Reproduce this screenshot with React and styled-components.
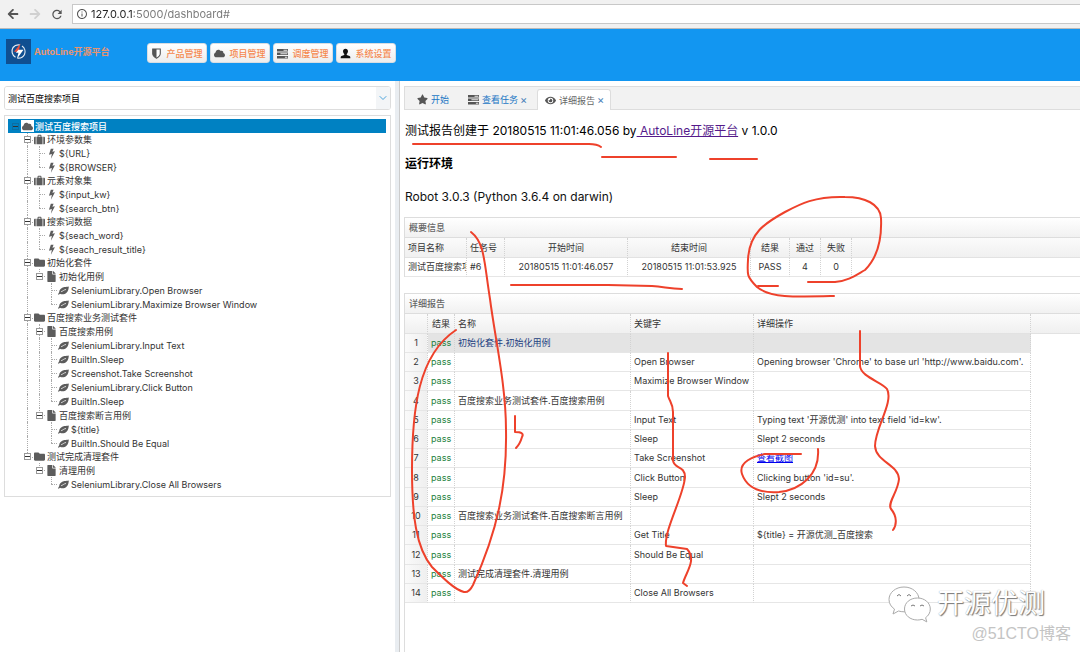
import React from 'react'
import styled, { createGlobalStyle, css } from 'styled-components'

//REACT ICONS
import {
  FaArrowLeft, FaArrowRight, FaCloud, FaEye, FaFile, FaFolder, FaStar,
} from 'react-icons/fa'
import { MdInfoOutline, MdRefresh } from 'react-icons/md'
import { FiChevronDown } from 'react-icons/fi'

const GlobalStyle = createGlobalStyle`
  * { box-sizing: border-box; }
  body {
    margin: 0;
    background: #fff;
    color: #333;
    font-family: Inter, "Noto Sans CJK SC", sans-serif;
    font-size: 9px;
  }
  button, input, select { font: inherit; margin: 0; }
  a { text-decoration: none; }
`

const Page = styled.div`
  position: relative;
  min-height: 100vh;
  display: flex;
  flex-direction: column;
  overflow: hidden;
`

// browser chrome
const BrowserBar = styled.div`
  height: 29px;
  display: flex;
  align-items: center;
  background: #f1f1f1;
  border-bottom: 1px solid #b9b9b9;
  padding-left: 6px;
`
const NavButton = styled.button`
  width: 14px;
  height: 20px;
  padding: 0;
  margin-right: 8px;
  border: none;
  background: none;
  display: flex;
  align-items: center;
  justify-content: center;
  color: ${props => (props.disabled ? '#d0d0d0' : '#555')};
  font-size: ${props => (props.$big ? 15 : 12)}px;
`
const AddressBox = styled.label`
  flex: 1;
  height: 20px;
  display: flex;
  align-items: center;
  gap: 3px;
  padding-left: 3px;
  background: #fff;
  border: 1px solid #c8c8c8;
  border-right: none;
  font-size: 12px;
  color: #555;
`
const Address = styled.input`
  flex: 1;
  height: 18px;
  border: none;
  outline: none;
  padding: 0;
  font-size: 11px;
  color: transparent;
  background: linear-gradient(90deg, #222 43px, #777 43px);
  background-clip: text;
`

// top banner
const Banner = styled.header`
  height: 52px;
  display: flex;
  align-items: flex-start;
  padding: 10px 6px 0;
  background: #1296f1;
`
const Brand = styled.div`
  width: 141px;
  height: 25px;
  display: flex;
  align-items: center;
  gap: 3px;
  font-weight: 700;
  color: #e8946f;
`
const Menu = styled.nav`
  display: flex;
  gap: 3px;
  padding-top: 4px;
`
const MenuButton = styled.button`
  width: 60px;
  height: 20px;
  display: flex;
  align-items: center;
  justify-content: center;
  gap: 4px;
  padding: 0;
  white-space: nowrap;
  border: 1px solid #d8dde2;
  border-radius: 3px;
  background: linear-gradient(#fff, #ededed);
  color: #f5884e;
  font-weight: 500;
  svg { font-size: 11px; color: #555; flex: none; }
`

// split layout
const Body = styled.div`
  flex: 1;
  display: flex;
`
const Side = styled.aside`
  width: 395px;
  flex: none;
  padding: 5px 4px;
`
const Splitter = styled.div`
  width: 5px;
  flex: none;
  background: #e9edf1;
  border-right: 1px solid #ccc;
`
const Main = styled.main`
  flex: 1;
  min-width: 0;
  display: flex;
  flex-direction: column;
  padding: 5px 0 0 4px;
`
const Combo = styled.label`
  height: 24px;
  display: flex;
  align-items: center;
  position: relative;
  border: 1px solid #ddd;
  border-radius: 3px;
  overflow: hidden;
`
const Select = styled.select`
  flex: 1;
  height: 22px;
  border: none;
  outline: none;
  appearance: none;
  padding: 0 0 0 3px;
  background: #fff;
  color: #000;
`
const ComboArrow = styled.span`
  position: absolute;
  right: 0;
  top: 0;
  bottom: 0;
  width: 14px;
  display: flex;
  align-items: center;
  justify-content: center;
  background: #f3f5f7;
  color: #4aa3dc;
  font-size: 12px;
  pointer-events: none;
`

const SideInner = styled.div`
  width: 387px;
`
const Tree = styled.ul`
  list-style: none;
  margin: 5px 0 0;
  padding: 3px 4px 5px 3px;
  border: 1px solid #ddd;
`
const SubTree = styled.ul`
  list-style: none;
  margin: 0;
  padding: 0;
`
const TreeRow = styled.div`
  height: ${props => (props.$depth === 1 ? 13 : 14)}px;
  display: flex;
  align-items: center;
  padding-left: 1px;
  white-space: nowrap;
  color: #333;
  ${props => props.$selected && css`
    background: #0081c2;
    color: #fff;
    font-weight: 500;
  `}
`
const Guide = styled.span`
  width: 12px;
  align-self: stretch;
  flex: none;
  display: flex;
  align-items: center;
  justify-content: center;
  position: relative;
  &::before {
    content: '';
    display: ${props => (props.$line ? 'block' : 'none')};
    position: absolute;
    left: 6px;
    top: 0;
    bottom: ${props => (props.$last ? '50%' : 0)};
    border-left: 1px dotted #aaa;
  }
  &::after {
    content: '';
    display: ${props => (props.$arm ? 'block' : 'none')};
    position: absolute;
    left: 6px;
    right: 0;
    top: 50%;
    border-top: 1px dotted #aaa;
  }
`
const Toggle = styled.button`
  position: relative;
  z-index: 1;
  width: 7px;
  height: 7px;
  padding: 0;
  border: 1px solid ${props => (props.$root ? '#0a6ea5' : '#999')};
  background: ${props => (props.$root ? '#0081c2' : '#fff')};
  display: flex;
  align-items: center;
  &::before {
    content: '';
    width: 5px;
    height: 1px;
    background: #333;
  }
`
const NodeIcon = styled.span`
  width: 13px;
  height: 12px;
  flex: none;
  display: flex;
  align-items: center;
  justify-content: center;
  font-size: 11px;
  color: #5c5c5c;
  background: ${props => (props.$boxed ? '#fff' : 'none')};
`
const NodeText = styled.span`
  padding-left: 1px;
`

// tabs
const Tabs = styled.div`
  height: 24px;
  display: flex;
  align-items: flex-end;
  flex: none;
  padding-left: 1px;
  background: #f2f2f2;
  border: 1px solid #ddd;
  border-right: none;
`
const Tab = styled.div`
  height: ${props => (props.$active ? 21 : 20)}px;
  margin-bottom: ${props => (props.$active ? -1 : 0)}px;
  display: flex;
  align-items: center;
  padding: ${props => (props.$active ? '0 4px 0 7px' : '0 7px 0 10px')};
  border: 1px solid ${props => (props.$active ? '#ddd' : 'transparent')};
  border-bottom: none;
  border-radius: 3px 3px 0 0;
  background: ${props => (props.$active ? '#fff' : 'none')};
  svg { font-size: 11px; color: #555; margin-right: 3px; }
`
const TabLabel = styled.button`
  display: flex;
  align-items: center;
  padding: 0;
  border: none;
  background: none;
  white-space: nowrap;
  color: ${props => (props.$active ? '#666' : '#1a76c4')};
`
const TabClose = styled.button`
  width: 11px;
  padding: 0;
  border: none;
  background: none;
  font-size: 11px;
  line-height: 12px;
  color: #4a7fb8;
`

// report
const Report = styled.div`
  flex: 1;
  display: flex;
  flex-direction: column;
  padding-left: 1px;
`
const Intro = styled.p`
  margin: 0;
  padding-top: 12px;
  font-size: 12px;
  line-height: 18px;
  color: #000;
`
const IntroLink = styled.a`
  color: #551a8b;
  text-decoration: underline;
`
const EnvTitle = styled.h3`
  margin: 15px 0 0;
  font-size: 12px;
  line-height: 18px;
  font-weight: 600;
  color: #000;
`
const EnvText = styled.p`
  margin: 15px 0 11px;
  font-size: 12px;
  line-height: 18px;
  color: #111;
`
const Panel = styled.section`
  flex: ${props => (props.$fill ? '1' : 'none')};
  border: 1px solid #ddd;
  border-right: none;
  border-bottom: none;
  margin-left: -1px;
  margin-bottom: ${props => (props.$fill ? 0 : 16)}px;
`
const PanelTitle = styled.h4`
  height: 20px;
  margin: 0;
  padding-left: 4px;
  line-height: 20px;
  font-size: 9px;
  font-weight: 500;
  color: #666;
  background: linear-gradient(#fff, #f1f1f1);
  border-bottom: 1px solid #ddd;
`
const Grid = styled.table`
  width: 100%;
  table-layout: fixed;
  border-collapse: separate;
  border-spacing: 0;
`
const HeadCell = styled.th`
  height: 20px;
  padding: 0 3px;
  font-weight: 400;
  text-align: ${props => props.$align || 'left'};
  white-space: nowrap;
  color: #333;
  background: linear-gradient(#fbfbfb, #f0f0f0);
  border-right: 1px dotted #d2d2d2;
  border-bottom: 1px solid #e2e2e2;
  &:last-child { border-right: none; }
`
const Cell = styled.td`
  height: 19px;
  padding: 0 3px;
  line-height: 12px;
  text-align: ${props => props.$align || 'left'};
  white-space: nowrap;
  overflow: hidden;
  color: ${props => props.$color || '#333'};
  border-right: 1px dotted #d2d2d2;
  border-bottom: 1px solid #e6e6e6;
`
const RowNumber = styled(Cell)`
  text-align: center;
  background: linear-gradient(90deg, #fafafa, #efefef);
`
const Filler = styled.td`
  background: #fff;
  border-bottom: ${props => (props.$line ? '1px solid #e2e2e2' : 'none')};
`
const Row = styled.tr`
  background: ${props => (props.$hover ? '#e4e4e4' : '#fff')};
  &:nth-child(4n) ${Cell} { height: 20px; }
`
const ShotLink = styled.a`
  color: #0000ee;
  text-decoration: underline;
`

// hand-drawn marks over the page
const Marks = styled.svg`
  position: absolute;
  left: 0;
  top: 0;
  pointer-events: none;
  fill: none;
  stroke: #ee412b;
  stroke-width: 2;
  stroke-linecap: round;
  stroke-linejoin: round;
`
const Watermark = styled.div`
  position: absolute;
  right: 35px;
  bottom: 28px;
  display: flex;
  align-items: center;
  gap: 6px;
  font-size: 27px;
  line-height: 40px;
  color: #fff;
  text-shadow: 1px 1px 1px #777, 0 0 1px #999;
  pointer-events: none;
`
const BlogMark = styled.div`
  position: absolute;
  right: 9px;
  bottom: 8px;
  font-family: "Liberation Sans", "Noto Sans CJK SC", sans-serif;
  font-size: 16px;
  line-height: 20px;
  color: #c4c4c4;
  pointer-events: none;
`

const Logo = () => (
  <svg width="25" height="25" viewBox="0 0 25 25" fill="none">
    <rect width="25" height="25" fill="#0f4f91" />
    <path d="M9.5 18.2A7 7 0 0 1 7 8.5a7 7 0 0 1 7-2.4M16 7a7 7 0 0 1 2.500 8.500 7 7 0 0 1-7 3.600" stroke="#e8eef5" strokeWidth="1.200" />
    <path d="M14.500 4.500 8 12.800h4.500z" fill="#ee4f3c" />
    <path d="M12.500 10.800h5L10.800 20l1.700-6.200H9.800z" fill="#fff" />
  </svg>
)

const ShieldIcon = () => (
  <svg width="1em" height="1em" viewBox="0 0 16 16">
    <path d="M2.500 1.500h11v6.500c0 3.200-2.300 5.200-5.500 6.800C4.800 13.200 2.500 11.200 2.500 8z" fill="#fff" stroke="currentColor" strokeWidth="1.600" />
    <path d="M2.500 1.500H8v13.300C4.800 13.200 2.500 11.200 2.500 8z" fill="currentColor" />
  </svg>
)

const TasksIcon = () => (
  <svg width="1em" height="1em" viewBox="0 0 16 16">
    <path d="M0 1.500h16v3.600H0zM0 6.500h16v3.600H0zM0 11.500h16v3.600H0z" fill="currentColor" />
    <path d="M9.500 2.600h5.500v1.400H9.500zM5 7.600h10v1.400H5zM11.500 12.600H15v1.400h-3.500z" fill="#e6e6e6" />
  </svg>
)

const UserIcon = () => (
  <svg width="1em" height="1em" viewBox="0 0 16 16" fill="#111">
    <path d="M8 1c2.200 0 3.600 1.500 3.600 3.700 0 1.700-.8 3.200-1.800 4v1.600l4 1.500c.8.400 1.200 1 1.200 1.800V15H1v-1.400c0-.8.400-1.400 1.200-1.800l4-1.500V8.700c-1-.8-1.800-2.300-1.800-4C4.400 2.500 5.800 1 8 1z" />
  </svg>
)

const SuitcaseIcon = () => (
  <svg width="1em" height="1em" viewBox="0 0 16 16" fill="currentColor">
    <path d="M3.600 4h1.600V2.200C5.200 1.500 5.700 1 6.400 1h3.200c.7 0 1.200.5 1.200 1.200V4h1.600v11H3.600zM6.600 2.400V4h2.800V2.400z" fillRule="evenodd" />
    <path d="M0 5.500C0 4.700.7 4 1.500 4h1v11h-1C.7 15 0 14.300 0 13.500zM13.500 4h1c.8 0 1.500.7 1.500 1.500v8c0 .8-.7 1.500-1.500 1.500h-1z" />
  </svg>
)

const BoltIcon = () => (
  <svg width="1em" height="1em" viewBox="0 0 16 16" fill="currentColor">
    <path d="M7 1h4L9.300 5.300 13 4.600 7.200 15.500l1.300-6.700-4.200 1z" />
  </svg>
)

const LeafIcon = () => (
  <svg width="1em" height="1em" viewBox="0 0 16 16">
    <path d="M15.800 2c-1.600.7-4 .3-6.600.9C4.800 4 1.500 6.800 1.700 10.700L0 13.300l1 .9 1.900-1.500c2.700 1.400 6.800 1.200 9.500-1.300C14.900 9 15.400 5.500 15.800 2z" fill="currentColor" />
    <path d="M4.500 9.800C6.800 9.200 8.500 6.900 11.700 6.500" stroke="#fff" strokeWidth="1.100" fill="none" />
  </svg>
)

const WechatIcon = () => (
  <svg width="44" height="38" viewBox="0 0 44 38" fill="#fff" stroke="#aaa" strokeWidth="1">
    <path d="M17 2C8.500 2 2 7.700 2 14.500c0 4 2.100 7.300 5.500 9.600L6 29l5.500-3c1.800.5 3.600.8 5.500.8 8.500 0 15-5.500 15-12.300S25.500 2 17 2z" />
    <path d="M30.500 13C23 13 17.500 17.800 17.500 24S23 35 30.500 35c1.600 0 3.200-.3 4.600-.7l4.700 2.600-1.200-4.200C41.500 30.700 43.300 27.600 43.300 24c0-6.200-5.700-11-12.800-11z" />
    <path d="M10 11q2-3 4 0M20 11q2-3 4 0M24 21q2-2 4 0M33 21q2-2 4 0" fill="none" stroke="#777" />
  </svg>
)

const icons = {
  cloud: <FaCloud />,
  suitcase: <SuitcaseIcon />,
  folder: <FaFolder />,
  file: <FaFile />,
  bolt: <BoltIcon />,
  leaf: <LeafIcon />,
}

const leaves = (icon, names) => names.map(text => ({ icon, text }))

const tree = {
  icon: 'cloud',
  text: '测试百度搜索项目',
  children: [
    { icon: 'suitcase', text: '环境参数集', children: leaves('bolt', ['${URL}', '${BROWSER}']) },
    { icon: 'suitcase', text: '元素对象集', children: leaves('bolt', ['${input_kw}', '${search_btn}']) },
    { icon: 'suitcase', text: '搜索词数据', children: leaves('bolt', ['${seach_word}', '${seach_result_title}']) },
    {
      icon: 'folder',
      text: '初始化套件',
      children: [
        {
          icon: 'file',
          text: '初始化用例',
          children: leaves('leaf', ['SeleniumLibrary.Open Browser', 'SeleniumLibrary.Maximize Browser Window']),
        },
      ],
    },
    {
      icon: 'folder',
      text: '百度搜索业务测试套件',
      children: [
        {
          icon: 'file',
          text: '百度搜索用例',
          children: leaves('leaf', [
            'SeleniumLibrary.Input Text',
            'BuiltIn.Sleep',
            'Screenshot.Take Screenshot',
            'SeleniumLibrary.Click Button',
            'BuiltIn.Sleep',
          ]),
        },
        {
          icon: 'file',
          text: '百度搜索断言用例',
          children: leaves('leaf', ['${title}', 'BuiltIn.Should Be Equal']),
        },
      ],
    },
    {
      icon: 'folder',
      text: '测试完成清理套件',
      children: [
        { icon: 'file', text: '清理用例', children: leaves('leaf', ['SeleniumLibrary.Close All Browsers']) },
      ],
    },
  ],
}

const menu = [
  { icon: <ShieldIcon />, text: '产品管理' },
  { icon: <FaCloud />, text: '项目管理' },
  { icon: <TasksIcon />, text: '调度管理' },
  { icon: <UserIcon />, text: '系统设置' },
]

const steps = [
  ['初始化套件.初始化用例', '', ''],
  ['', 'Open Browser', "Opening browser 'Chrome' to base url 'http://www.baidu.com'."],
  ['', 'Maximize Browser Window', ''],
  ['百度搜索业务测试套件.百度搜索用例', '', ''],
  ['', 'Input Text', "Typing text '开源优测' into text field 'id=kw'."],
  ['', 'Sleep', 'Slept 2 seconds'],
  ['', 'Take Screenshot', <ShotLink href="#">查看截图</ShotLink>],
  ['', 'Click Button', "Clicking button 'id=su'."],
  ['', 'Sleep', 'Slept 2 seconds'],
  ['百度搜索业务测试套件.百度搜索断言用例', '', ''],
  ['', 'Get Title', '${title} = 开源优测_百度搜索'],
  ['', 'Should Be Equal', ''],
  ['测试完成清理套件.清理用例', '', ''],
  ['', 'Close All Browsers', ''],
]

const strokes = [
  'M413 144H589Q597 144 601 147',
  'M602 157H676',
  'M710 159H757',
  'M471 232C485 243 484 262 490 299C495 338 506 385 506 430C507 485 498 530 473 585Q469 593 464 592C455 590 443 578 432 567C416 548 412 515 412 470C412 410 418 355 456 330',
  'M515 416V432Q525 432 522 437Q520 444 516 448',
  'M511 285H608L652 286C665 287 670 289 682 289',
  'M808 282H835C848 281 856 275 865 270C877 258 882 240 881 218C880 204 865 197 845 197C815 196 800 204 785 212C765 223 749 233 748 260C747 275 747 277 757 287C770 298 795 297 834 296',
  'M758 286H778',
  'M668 353V396C670 402 673 404 673 412V460C673 469 685 465 685 477C684 495 664 530 666 546L687 549C697 560 686 572 683 583L687 586',
  'M860 331V366C861 377 882 382 887 389C894 402 875 428 875 446C876 462 898 464 899 479C898 492 887 503 891 509C897 516 897 525 893 530',
  'M801 454H765C754 456 738 462 742 474C748 491 765 493 779 492C800 490 820 475 818 449',
]

// lines holds, for each ancestor level, whether its branch goes on below
function TreeNode({ node, lines, last }) {
  const depth = lines.length
  const isLeaf = !node.children
  return (
    <li>
      <TreeRow $depth={depth} $selected={depth === 0}>
        {lines.map((on, i) => <Guide key={i} $line={on} />)}
        <Guide $line={depth > 0} $last={last} $arm={depth > 0}>
          {!isLeaf && <Toggle $root={depth === 0} aria-label={'折叠 ' + node.text} />}
        </Guide>
        <NodeIcon $boxed={depth === 0}>{icons[node.icon]}</NodeIcon>
        <NodeText>{node.text}</NodeText>
      </TreeRow>
      {!isLeaf && (
        <SubTree>
          {node.children.map((child, i) => (
            <TreeNode
              key={i}
              node={child}
              lines={[...lines, depth > 0 && !last]}
              last={i === node.children.length - 1}
            />
          ))}
        </SubTree>
      )}
    </li>
  )
}

function SummaryTable() {
  return (
    <Panel>
      <PanelTitle>概要信息</PanelTitle>
      <Grid>
        <colgroup>
          <col style={{ width: 62 }} />
          <col style={{ width: 38 }} />
          <col style={{ width: 123 }} />
          <col style={{ width: 123 }} />
          <col style={{ width: 39 }} />
          <col style={{ width: 31 }} />
          <col style={{ width: 31 }} />
          <col />
        </colgroup>
        <thead>
          <tr>
            <HeadCell>项目名称</HeadCell>
            <HeadCell>任务号</HeadCell>
            <HeadCell $align="center">开始时间</HeadCell>
            <HeadCell $align="center">结束时间</HeadCell>
            <HeadCell $align="center">结果</HeadCell>
            <HeadCell $align="center">通过</HeadCell>
            <HeadCell $align="center">失败</HeadCell>
            <HeadCell />
          </tr>
        </thead>
        <tbody>
          <tr>
            <Cell>测试百度搜索项目</Cell>
            <Cell>#6</Cell>
            <Cell $align="center">20180515 11:01:46.057</Cell>
            <Cell $align="center">20180515 11:01:53.925</Cell>
            <Cell $align="center">PASS</Cell>
            <Cell $align="center">4</Cell>
            <Cell $align="center">0</Cell>
            <Filler $line />
          </tr>
        </tbody>
      </Grid>
    </Panel>
  )
}

function DetailTable() {
  return (
    <Panel $fill>
      <PanelTitle>详细报告</PanelTitle>
      <Grid>
        <colgroup>
          <col style={{ width: 23 }} />
          <col style={{ width: 27 }} />
          <col style={{ width: 176 }} />
          <col style={{ width: 123 }} />
          <col style={{ width: 277 }} />
          <col />
        </colgroup>
        <thead>
          <tr>
            <HeadCell />
            <HeadCell $align="center">结果</HeadCell>
            <HeadCell>名称</HeadCell>
            <HeadCell>关键字</HeadCell>
            <HeadCell>详细操作</HeadCell>
            <HeadCell />
          </tr>
        </thead>
        <tbody>
          {steps.map(([name, keyword, detail], i) => (
            <Row key={i} $hover={i === 0}>
              <RowNumber>{i + 1}</RowNumber>
              <Cell $color="#1d7f3c">pass</Cell>
              <Cell $color={i === 0 ? '#1c3f80' : undefined}>{name}</Cell>
              <Cell>{keyword}</Cell>
              <Cell>{detail}</Cell>
              <Filler />
            </Row>
          ))}
        </tbody>
      </Grid>
    </Panel>
  )
}

function App() {
  return (
    <Page>
      <GlobalStyle />
      <BrowserBar>
        <NavButton aria-label="后退"><FaArrowLeft /></NavButton>
        <NavButton aria-label="前进" disabled><FaArrowRight /></NavButton>
        <NavButton aria-label="刷新" $big><MdRefresh /></NavButton>
        <AddressBox>
          <MdInfoOutline />
          <Address aria-label="地址" defaultValue="127.0.0.1:5000/dashboard#" />
        </AddressBox>
      </BrowserBar>
      <Banner>
        <Brand><Logo />AutoLine开源平台</Brand>
        <Menu>
          {menu.map(item => (
            <MenuButton key={item.text}>{item.icon}{item.text}</MenuButton>
          ))}
        </Menu>
      </Banner>
      <Body>
        <Side>
          <SideInner>
            <Combo>
              <Select aria-label="项目">
                <option>测试百度搜索项目</option>
              </Select>
              <ComboArrow><FiChevronDown /></ComboArrow>
            </Combo>
            <Tree>
              <TreeNode node={tree} lines={[]} last />
            </Tree>
          </SideInner>
        </Side>
        <Splitter />
        <Main>
          <Tabs>
            <Tab><TabLabel><FaStar />开始</TabLabel></Tab>
            <Tab>
              <TabLabel><TasksIcon />查看任务</TabLabel>
              <TabClose aria-label="关闭 查看任务">×</TabClose>
            </Tab>
            <Tab $active>
              <TabLabel $active><FaEye />详细报告</TabLabel>
              <TabClose aria-label="关闭 详细报告">×</TabClose>
            </Tab>
          </Tabs>
          <Report>
            <Intro>
              测试报告创建于 20180515 11:01:46.056 by
              <IntroLink href="#"> AutoLine开源平台</IntroLink> v 1.0.0
            </Intro>
            <EnvTitle>运行环境</EnvTitle>
            <EnvText>Robot 3.0.3 (Python 3.6.4 on darwin)</EnvText>
            <SummaryTable />
            <DetailTable />
          </Report>
        </Main>
      </Body>
      <Watermark><WechatIcon />开源优测</Watermark>
      <BlogMark>@51CTO博客</BlogMark>
      <Marks width="1080" height="652" viewBox="0 0 1080 652">
        {strokes.map(d => <path key={d} d={d} />)}
      </Marks>
    </Page>
  )
}

export default App
